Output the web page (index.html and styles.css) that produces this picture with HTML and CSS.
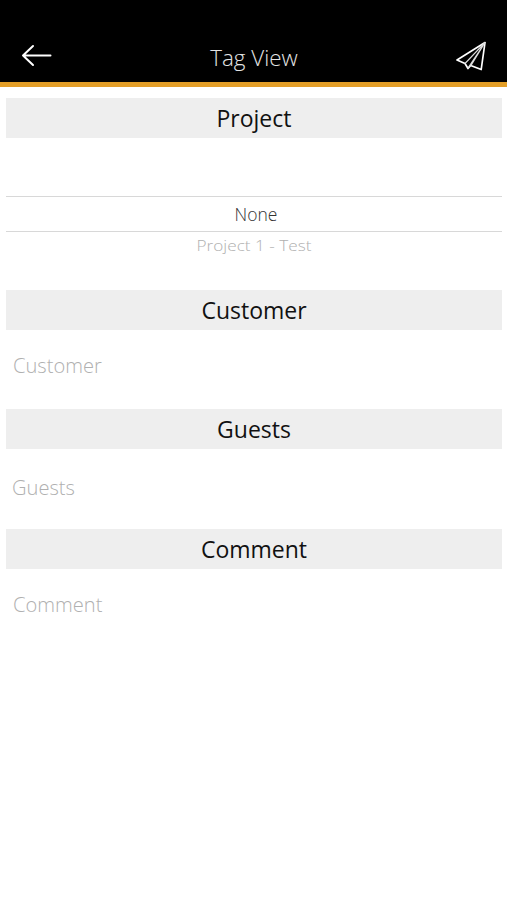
FILE: index.html
```html
<!DOCTYPE html>
<html lang="en">
<head>
<meta charset="utf-8">
<title>Tag View</title>
<link rel="stylesheet" href="styles.css">
</head>
<body>
<header class="bar">
  <svg class="back" viewBox="0 0 32 24"><path d="M12 3 2 12.500l10 9.500M2 12.500h27.500"/></svg>
  <h1>Tag View</h1>
  <svg class="send" viewBox="0 0 32 32"><path d="M30 3.500 2 21l8 3.500 3 5 2.700-3 10.500 4z"/><path class="fold" d="M30 3.500 10 24.500M30 3.500 13 29M30 3.500 16 26.500"/></svg>
</header>
<main>
  <h2>Project</h2>
  <div class="picker">
    <div class="selected">None</div>
    <div class="option"><span>Project 1 - Test</span></div>
  </div>
  <h2>Customer</h2>
  <div class="field customer">Customer</div>
  <h2>Guests</h2>
  <div class="field guests">Guests</div>
  <h2>Comment</h2>
  <div class="field comment">Comment</div>
</main>
</body>
</html>
```

FILE: styles.css
```css
* { box-sizing: border-box; }
body { margin: 0; background: #fff; font-family: "Open Sans", sans-serif; }
.bar { height: 87px; padding: 28px 20px 0 21px; background: #000; border-bottom: 5px solid #e39e27; display: grid; grid-template-columns: 32px 1fr 32px; align-items: center; }
svg { fill: none; stroke: #fff; stroke-width: 2; stroke-linejoin: round; stroke-linecap: round; }
.back { width: 32px; height: 24px; }
.send { width: 32px; height: 32px; stroke-width: 1.700; }
.fold { stroke-width: 1.100; stroke: #ddd; }
h1 { margin: 5px 0 0; color: #e4e4e4; font-size: 22.400px; font-weight: 300; line-height: 30px; text-align: center; }
main { padding: 11px 5px 0 6px; }
h2 { margin: 0; height: 40px; background: #eee; color: #111; font-size: 23px; font-weight: 400; line-height: 41px; text-align: center; }
.picker { height: 152px; padding-top: 58px; text-align: center; }
.selected { height: 36px; padding-left: 4px; border: solid #d8d8d8; border-width: 1px 0; color: #333; font-size: 17.500px; font-weight: 300; line-height: 35px; }
.option { color: #b0b0b0; font-size: 17.200px; font-weight: 300; line-height: 27px; }
.option span { display: inline-block; transform: scaleY(0.880); }
.field { color: #b0b0b0; font-size: 20.100px; font-weight: 300; line-height: 30px; }
.customer { height: 79px; padding: 21px 7px 0; }
.guests { height: 80px; padding: 24px 6px 0; }
.comment { padding: 21px 7px 0; }
```
